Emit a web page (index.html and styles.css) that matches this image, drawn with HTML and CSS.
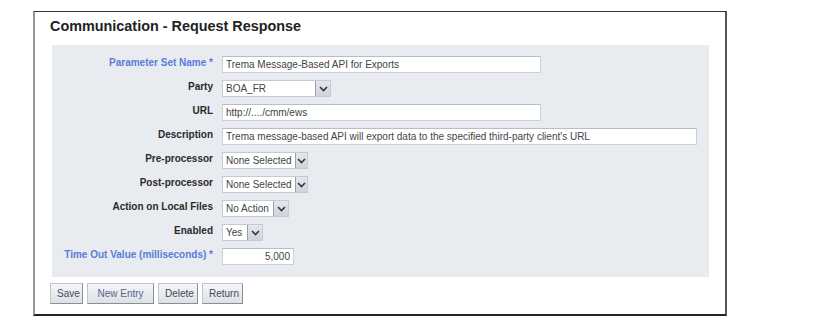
FILE: index.html
```html
<!DOCTYPE html>
<html lang="en">
<head>
    <meta charset="UTF-8">
    <meta name="viewport" content="width=device-width, initial-scale=1.0">
    <title>Communication - Request Response</title>
    <link rel="stylesheet" href="styles.css">
</head>
<body>

    <div class="frame">
        <h1>Communication - Request Response</h1>

        <div class="panel">
            <div class="form">
                <label class="required">Parameter Set Name *</label>
                <input class="text wide" type="text" value="Trema Message-Based API for Exports">

                <label>Party</label>
                <div class="select party">
                    <span class="select-value">BOA_FR</span>
                    <span class="select-btn"><svg width="9" height="6" viewBox="0 0 9 6"><path d="M1 1 L4.5 4.5 L8 1" fill="none" stroke="#334" stroke-width="1.6"/></svg></span>
                </div>

                <label>URL</label>
                <input class="text wide" type="text" value="http://..../cmm/ews">

                <label>Description</label>
                <input class="text full" type="text" value="Trema message-based API will export data to the specified third-party client's URL">

                <label>Pre-processor</label>
                <div class="select proc">
                    <span class="select-value">None Selected</span>
                    <span class="select-btn"><svg width="9" height="6" viewBox="0 0 9 6"><path d="M1 1 L4.5 4.5 L8 1" fill="none" stroke="#334" stroke-width="1.6"/></svg></span>
                </div>

                <label>Post-processor</label>
                <div class="select proc">
                    <span class="select-value">None Selected</span>
                    <span class="select-btn"><svg width="9" height="6" viewBox="0 0 9 6"><path d="M1 1 L4.5 4.5 L8 1" fill="none" stroke="#334" stroke-width="1.6"/></svg></span>
                </div>

                <label>Action on Local Files</label>
                <div class="select action">
                    <span class="select-value">No Action</span>
                    <span class="select-btn"><svg width="9" height="6" viewBox="0 0 9 6"><path d="M1 1 L4.5 4.5 L8 1" fill="none" stroke="#334" stroke-width="1.6"/></svg></span>
                </div>

                <label>Enabled</label>
                <div class="select yesno">
                    <span class="select-value">Yes</span>
                    <span class="select-btn"><svg width="9" height="6" viewBox="0 0 9 6"><path d="M1 1 L4.5 4.5 L8 1" fill="none" stroke="#334" stroke-width="1.6"/></svg></span>
                </div>

                <label class="required">Time Out Value (milliseconds) *</label>
                <input class="text number" type="text" value="5,000">
            </div>
        </div>

        <div class="buttons">
            <button class="save">Save</button>
            <button class="new">New Entry</button>
            <button class="delete">Delete</button>
            <button class="return">Return</button>
        </div>
    </div>

</body>
</html>
```

FILE: styles.css
```css
body {
    font-family: "Liberation Sans", Arial, sans-serif;
    background-color: #fff;
    margin: 0;
    padding: 0;
}
.frame {
    box-sizing: border-box;
    width: 694px;
    height: 305px;
    margin: 11px 0 0 33px;
    padding: 0 16px 0 15px;
    border-top: 1px solid #333;
    border-left: 2px solid #999;
    border-right: 2px solid #555;
    border-bottom: 2px solid #222;
}
h1 {
    font-size: 14.4px;
    font-weight: bold;
    color: #222;
    margin: 0;
    padding: 6px 0 0 0;
    height: 27px;
    line-height: 16px;
}
.panel {
    margin-left: 2px;
    width: 657px;
    height: 232px;
    box-sizing: border-box;
    background-color: #e8ebf0;
    padding: 11px 0 0 0;
}
.form {
    display: grid;
    grid-template-columns: 161px auto;
    grid-auto-rows: 17px;
    column-gap: 9px;
    row-gap: 7px;
    justify-items: start;
}
.form label {
    justify-self: end;
    font-size: 10px;
    font-weight: bold;
    color: #2a2a2a;
    line-height: 14px;
    white-space: nowrap;
}
.form label.required {
    color: #5b7bd8;
}
.text {
    box-sizing: border-box;
    height: 17px;
    margin: 0;
    padding: 0 3px;
    font-family: "Liberation Sans", Arial, sans-serif;
    font-size: 10px;
    color: #444;
    background-color: #fff;
    border: 1px solid #cdd1d7;
    border-top-color: #b9bec6;
    outline: none;
}
.wide {
    width: 319px;
}
.full {
    width: 475px;
}
.number {
    width: 72px;
    text-align: right;
}
.select {
    display: flex;
    height: 17px;
    box-sizing: border-box;
    background-color: #fff;
    border: 1px solid #c6cbd2;
    font-size: 10px;
    color: #444;
}
.select-value {
    flex: 1;
    padding: 0 3px;
    line-height: 15px;
    white-space: nowrap;
}
.select-btn {
    width: 14px;
    display: flex;
    align-items: center;
    justify-content: center;
    background: linear-gradient(#e4e7ec, #cfd3da);
    border-left: 1px solid #9aa1ab;
}
.party {
    width: 109px;
}
.proc {
    width: 86px;
}
.action {
    width: 67px;
}
.yesno {
    width: 41px;
}
.buttons {
    display: flex;
    gap: 4px;
    margin-top: 6px;
}
button {
    height: 21px;
    margin: 0;
    padding: 0 6px;
    font-family: "Liberation Sans", Arial, sans-serif;
    font-size: 10px;
    color: #444a5c;
    background: linear-gradient(#f5f6f8, #dde0e5);
    border: 1px solid #c2c6cc;
    border-right-color: #8a8f97;
    border-bottom-color: #8a8f97;
    cursor: pointer;
}
button.new {
    width: 67px;
    color: #56668f;
}
button.save {
    width: 33px;
}
button.delete {
    width: 40px;
}
button.return {
    width: 41px;
}
```
